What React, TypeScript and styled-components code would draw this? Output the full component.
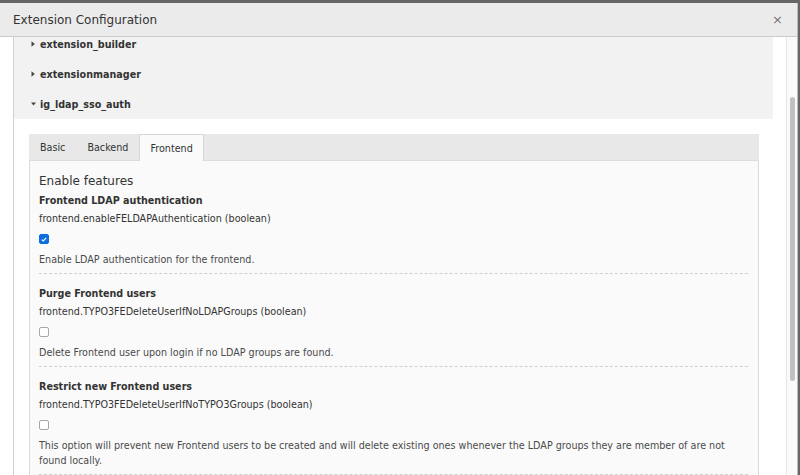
import React from 'react'
import styled, { createGlobalStyle } from 'styled-components'

const GlobalStyle = createGlobalStyle`
    html, body {
        margin: 0;
        padding: 0;
        background: #666;
    }
    body {
        font-family: "DejaVu Sans", Verdana, sans-serif;
        color: #333;
    }
    #root {
        height: 475px;
        overflow: hidden;
    }
`

const Modal = styled.div`
    margin-top: 3px;
    width: 797px;
    height: 472px;
    background: #fff;
    border-right: 1px solid #bdbdbd;
    display: flex;
    flex-direction: column;
    overflow: hidden;
`

const Header = styled.div`
    height: 33px;
    flex-shrink: 0;
    background: #ebebeb;
    border-bottom: 1px solid #cbcbcb;
    display: flex;
    align-items: center;
    justify-content: space-between;
    padding: 0 14px 0 13px;
`

const Title = styled.div`
    font-size: 12px;
    color: #333;
`

const Close = styled.span`
    font-size: 13px;
    color: #777;
    line-height: 1;
`

const Body = styled.div`
    flex: 1;
    min-height: 0;
    display: flex;
`

const Scroll = styled.div`
    flex: 1;
    overflow: hidden;
    padding: 0 13px;
`

const Track = styled.div`
    width: 10px;
    flex-shrink: 0;
    background: #fafafa;
    border-left: 1px solid #e6e6e6;
    display: flex;
    justify-content: center;
`

const Thumb = styled.div`
    width: 5px;
    height: 284px;
    margin-top: 60px;
    border-radius: 3px;
    background: #c1c1c1;
`

const Panel = styled.div`
    margin-top: -8px;
    border-left: 1px solid #cfcfcf;
`

const Row = styled.div`
    height: 30px;
    background: #f2f2f2;
    display: flex;
    align-items: center;
    padding-left: 17px;
    gap: 4px;
    font-size: 9.6px;
    font-weight: bold;
    color: #333;
`

const Caret = ({ open }: { open?: boolean }) => (
    <svg width="5" height="6" viewBox="0 0 5 6" style={{ flexShrink: 0 }}>
        {open
            ? <path d="M0 1.5 L5 1.5 L2.5 4.5 Z" fill="#444" />
            : <path d="M0.5 0.3 L3.8 3 L0.5 5.7 Z" fill="#444" />}
    </svg>
)

const TabArea = styled.div`
    margin: 15px 14px 0 15px;
`

const TabBar = styled.div`
    height: 26px;
    background: #e8e8e8;
    display: flex;
    align-items: stretch;
`

const Tab = styled.div<{ $active?: boolean }>`
    display: flex;
    align-items: center;
    padding: 0 10px;
    font-size: 9.6px;
    color: #333;
    border: 1px solid ${p => (p.$active ? '#d7d7d7' : 'transparent')};
    border-bottom: none;
    background: ${p => (p.$active ? '#fafafa' : 'transparent')};
    margin-bottom: ${p => (p.$active ? '-1px' : '0')};
    position: relative;
`

const TabPanel = styled.div`
    background: #fafafa;
    border: 1px solid #dcdcdc;
    padding: 11px 10px 40px 9px;
`

const Heading = styled.div`
    font-size: 12px;
    line-height: 18px;
    margin-bottom: 2px;
`

const Item = styled.div<{ $first?: boolean }>`
    padding: ${p => (p.$first ? '0' : '11px')} 0 6px;
    border-bottom: 1px dashed #d0d0d0;
`

const ItemTitle = styled.div`
    font-size: 9.6px;
    font-weight: bold;
    line-height: 18px;
`

const Code = styled.div`
    font-size: 9.6px;
    line-height: 17px;
`

const Box = styled.span<{ $checked?: boolean }>`
    display: flex;
    align-items: center;
    justify-content: center;
    width: 10px;
    height: 10px;
    box-sizing: border-box;
    border-radius: 2px;
    margin: 7px 0 8px;
    background: ${p => (p.$checked ? '#0b6ddf' : '#fff')};
    border: 1px solid ${p => (p.$checked ? '#0b6ddf' : '#a8a8a8')};
`

const Desc = styled.div`
    font-size: 9.6px;
    line-height: 15px;
    color: #4a4a4a;
`

const Checkbox = ({ checked }: { checked?: boolean }) => (
    <Box $checked={checked}>
        {checked && (
            <svg width="6" height="5" viewBox="0 0 6 5">
                <path d="M0.8 2.6 L2.3 4 L5.2 0.9" stroke="#fff" strokeWidth="1.2" fill="none" />
            </svg>
        )}
    </Box>
)

const settings = [
    {
        title: 'Frontend LDAP authentication',
        code: 'frontend.enableFELDAPAuthentication (boolean)',
        checked: true,
        desc: 'Enable LDAP authentication for the frontend.',
    },
    {
        title: 'Purge Frontend users',
        code: 'frontend.TYPO3FEDeleteUserIfNoLDAPGroups (boolean)',
        checked: false,
        desc: 'Delete Frontend user upon login if no LDAP groups are found.',
    },
    {
        title: 'Restrict new Frontend users',
        code: 'frontend.TYPO3FEDeleteUserIfNoTYPO3Groups (boolean)',
        checked: false,
        desc: 'This option will prevent new Frontend users to be created and will delete existing ones whenever the LDAP groups they are member of are not found locally.',
    },
]

const App = () => {
    return (
        <>
            <GlobalStyle />
            <Modal>
                <Header>
                    <Title>Extension Configuration</Title>
                    <Close>×</Close>
                </Header>
                <Body>
                    <Scroll>
                        <Panel>
                            <Row><Caret />extension_builder</Row>
                            <Row><Caret />extensionmanager</Row>
                            <Row><Caret open />ig_ldap_sso_auth</Row>
                            <TabArea>
                                <TabBar>
                                    <Tab>Basic</Tab>
                                    <Tab>Backend</Tab>
                                    <Tab $active>Frontend</Tab>
                                </TabBar>
                                <TabPanel>
                                    <Heading>Enable features</Heading>
                                    {settings.map((s, i) => (
                                        <Item key={s.code} $first={i === 0}>
                                            <ItemTitle>{s.title}</ItemTitle>
                                            <Code>{s.code}</Code>
                                            <Checkbox checked={s.checked} />
                                            <Desc>{s.desc}</Desc>
                                        </Item>
                                    ))}
                                </TabPanel>
                            </TabArea>
                        </Panel>
                    </Scroll>
                    <Track>
                        <Thumb />
                    </Track>
                </Body>
            </Modal>
        </>
    )
}

export default App
